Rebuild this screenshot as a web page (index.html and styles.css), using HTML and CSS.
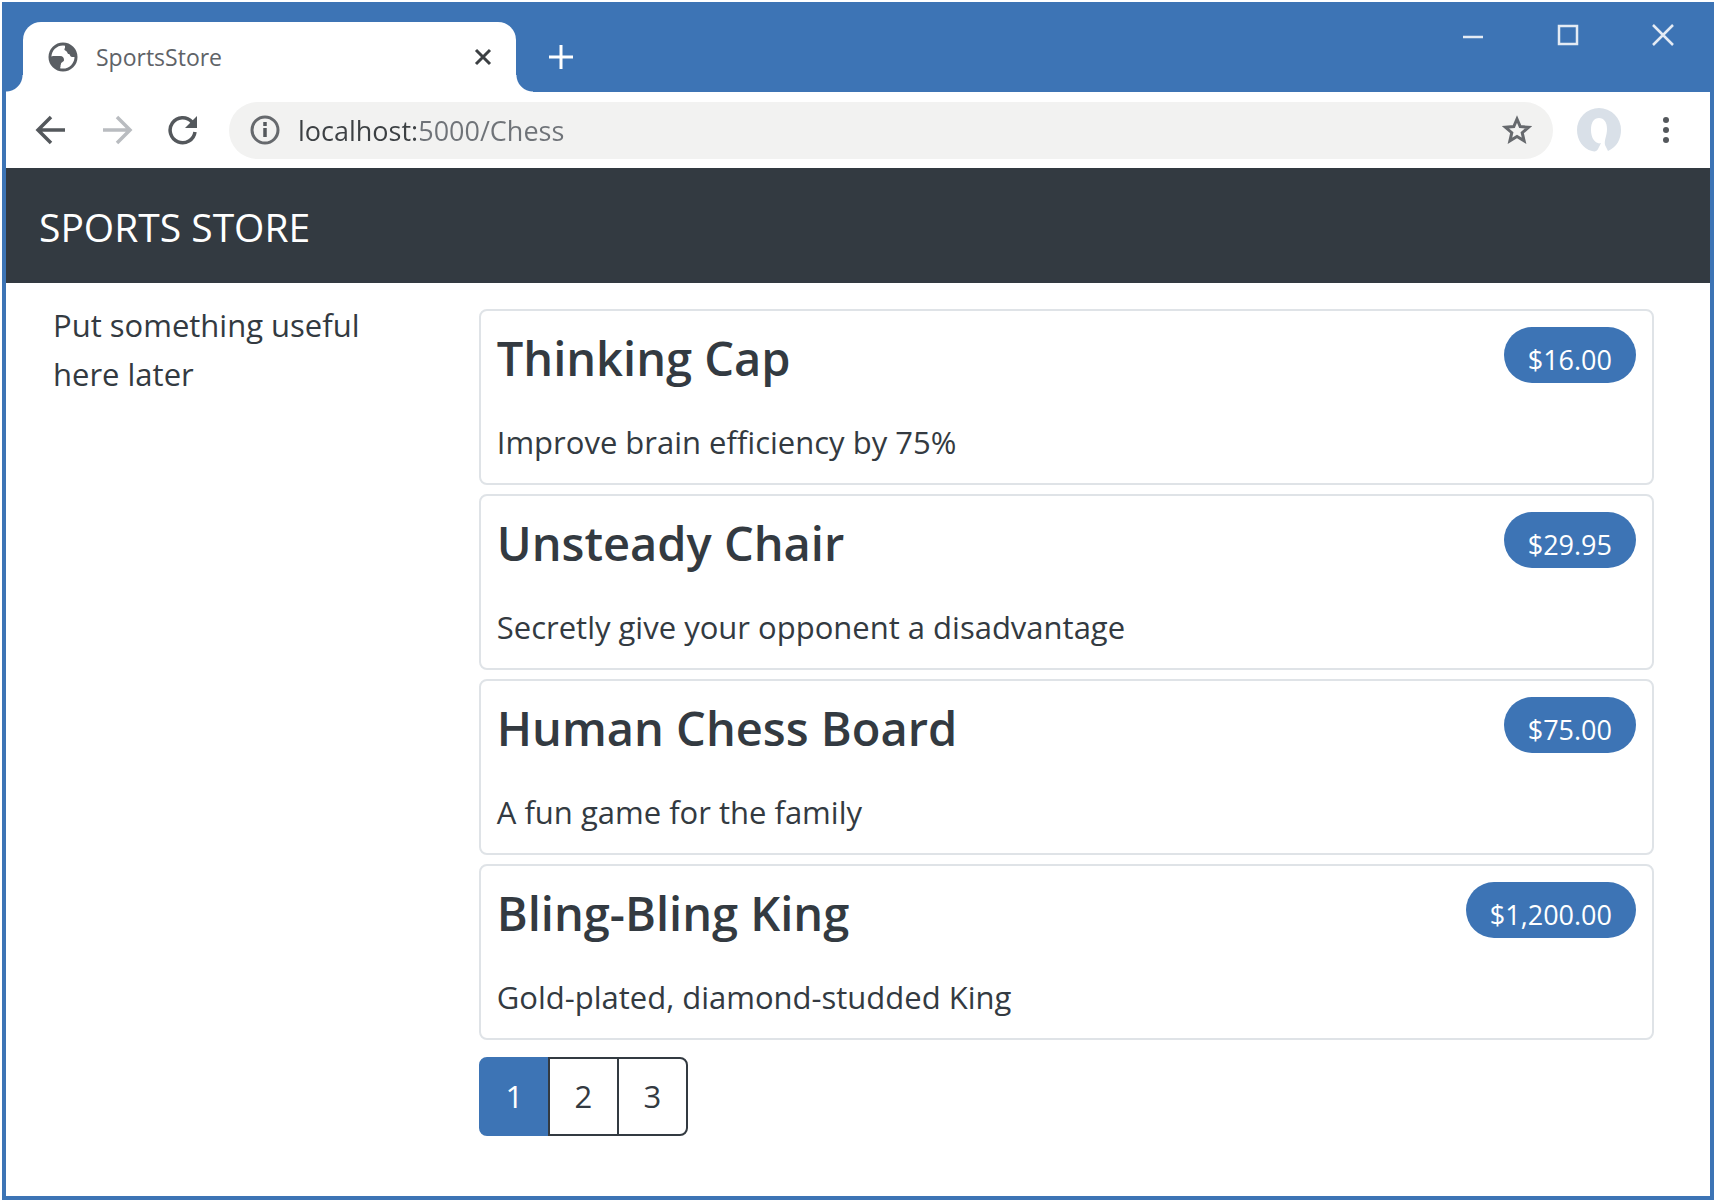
FILE: index.html
```html
<!DOCTYPE html>
<html lang="en">
<head>
<meta charset="utf-8">
<title>SportsStore</title>
<link rel="stylesheet" href="styles.css">
</head>
<body>
<div class="window">
  <div class="titlebar">
    <div class="tab">
      <svg class="tab-icon" viewBox="0 0 30 30" aria-hidden="true"><circle cx="15" cy="15" r="13" fill="#fff" stroke="#5a5e63" stroke-width="3"/><path d="M17 3v3c-1 1-1 2 1 3s1 3 3 3c1 0 1 3 3 3h4l-1-6-5-5zM2 15l3-1h7c3 0 4 2 4 4s-3 2-3 4c-1 2 0 3-1 4l1 2-6-3-4-5z" fill="#5a5e63"/></svg>
      <span class="tab-title">SportsStore</span>
      <button class="tab-close" aria-label="Close tab"><svg viewBox="0 0 18 18" width="18" height="18"><path d="M2 2l14 14M16 2L2 16" stroke="#3c4043" stroke-width="3"/></svg></button>
    </div>
    <button class="new-tab" aria-label="New tab"><svg viewBox="0 0 26 26" width="26" height="26"><path d="M13 1v24M1 13h24" stroke="#fff" stroke-width="3"/></svg></button>
    <div class="window-controls">
      <button aria-label="Minimize"><svg viewBox="0 0 22 22" width="22" height="22"><path d="M1 13h20" stroke="#e4ebf4" stroke-width="2.500"/></svg></button>
      <button aria-label="Maximize"><svg viewBox="0 0 22 22" width="22" height="22"><path d="M2 2h18v18H2z" fill="none" stroke="#e4ebf4" stroke-width="2.500"/></svg></button>
      <button aria-label="Close"><svg viewBox="0 0 22 22" width="22" height="22"><path d="M1 1l20 20M21 1L1 21" stroke="#e4ebf4" stroke-width="2.500"/></svg></button>
    </div>
  </div>
  <div class="toolbar">
    <div class="nav-buttons">
      <button aria-label="Back"><svg viewBox="0 0 32 32" width="32" height="32"><path d="M30 16H4M16 3L3 16l13 13" fill="none" stroke="#54585c" stroke-width="3.500"/></svg></button>
      <button aria-label="Forward"><svg viewBox="0 0 32 32" width="32" height="32"><path d="M2 16h26M16 3l13 13-13 13" fill="none" stroke="#b9bcc0" stroke-width="3.500"/></svg></button>
      <button aria-label="Reload"><svg viewBox="0 0 32 32" width="32" height="32"><path d="M28 18a12.500 12.500 0 1 1-3-10" fill="none" stroke="#54585c" stroke-width="3.500"/><path d="M30 2v12H18z" fill="#54585c"/></svg></button>
    </div>
    <div class="address">
      <svg viewBox="0 0 30 30" width="30" height="30" aria-hidden="true"><circle cx="15" cy="15" r="13" fill="none" stroke="#66696d" stroke-width="3"/><path d="M15 13v9M15 7v4" stroke="#54585c" stroke-width="3.500"/></svg>
      <input class="url" type="text" aria-label="Address" value="localhost:5000/Chess">
      <button aria-label="Bookmark"><svg viewBox="0 0 30 30" width="30" height="30"><path d="M15 4l3.200 7.600 8.300.700-6.300 5.400 1.900 8.100-7.100-4.300-7.100 4.300 1.900-8.100-6.300-5.400 8.300-.700z" fill="none" stroke="#66696d" stroke-width="3"/></svg></button>
    </div>
    <button class="profile" aria-label="Profile"><svg viewBox="0 0 44 44" width="44" height="44"><path d="M15 43C6 41 0 32 0 22a22 22 0 0 1 44 0c0 9-4 17-13 21l-3-6c-1-5 2-9 2-16 0-7-3-11-8-11s-8 4-8 12c0 7 3 12 7 13 1 1 2 0 3 0l-3 6c-1 2-3 3-6 2z" fill="#d9e0e8"/></svg></button>
    <button class="menu" aria-label="Menu"><svg viewBox="0 0 8 30" width="8" height="30"><g fill="#54585c"><circle cx="4" cy="5" r="3"/><circle cx="4" cy="15" r="3"/><circle cx="4" cy="25" r="3"/></g></svg></button>
  </div>
  <header class="store-header">SPORTS STORE</header>
  <div class="store-body">
    <aside class="sidebar">Put something useful here later</aside>
    <main>
      <div class="products">
        <article class="card"><div class="card-head"><h2>Thinking Cap</h2><span class="price">$16.00</span></div><p>Improve brain efficiency by 75%</p></article>
        <article class="card"><div class="card-head"><h2>Unsteady Chair</h2><span class="price">$29.95</span></div><p>Secretly give your opponent a disadvantage</p></article>
        <article class="card"><div class="card-head"><h2>Human Chess Board</h2><span class="price">$75.00</span></div><p>A fun game for the family</p></article>
        <article class="card"><div class="card-head"><h2>Bling-Bling King</h2><span class="price">$1,200.00</span></div><p>Gold-plated, diamond-studded King</p></article>
      </div>
      <nav class="pages" aria-label="Pages"><a class="current" href="#1">1</a><a href="#2">2</a><a href="#3">3</a></nav>
    </main>
  </div>
</div>
</body>
</html>
```
FILE: styles.css
```css
:root {
  --blue: #3d74b5;
  --dark: #333a41;
}

* {
  box-sizing: border-box;
}

body {
  display: flex;
  min-height: 100vh;
  margin: 0;
  padding: 2px;
  background: #fff;
  color: var(--dark);
  font: 31px/49px "Open Sans", "Noto Sans", sans-serif;
}

button {
  display: flex;
  padding: 0;
  border: 0;
  background: none;
}

.window {
  display: flex;
  flex: 1;
  flex-direction: column;
  border: 4px solid var(--blue);
  border-top: 0;
}

.titlebar {
  display: flex;
  height: 90px;
  padding-left: 17px;
  background: var(--blue);
}

.tab {
  position: relative;
  display: flex;
  align-items: center;
  width: 493px;
  margin-top: 20px;
  padding: 0 24px 0 25px;
  border-radius: 18px 18px 0 0;
  background: #fff;
}

.tab::before,
.tab::after {
  position: absolute;
  bottom: 0;
  width: 17px;
  height: 17px;
  content: "";
}

.tab::before {
  right: 100%;
  background: radial-gradient(circle at 0 0, var(--blue) 16px, #fff 17px);
}

.tab::after {
  left: 100%;
  background: radial-gradient(circle at 100% 0, var(--blue) 16px, #fff 17px);
}

.tab-icon {
  width: 30px;
  height: 30px;
}

.tab-title {
  flex: 1;
  margin-left: 18px;
  color: #5f6368;
  font-size: 23px;
}

.new-tab {
  align-items: center;
  margin: 20px 0 0 32px;
}

.window-controls {
  display: flex;
  gap: 73px;
  margin: 22px 36px 0 auto;
  align-items: flex-start;
}

.toolbar {
  display: flex;
  align-items: center;
  height: 76px;
  padding: 0 40px 0 29px;
}

.nav-buttons {
  display: flex;
  gap: 34px;
}

.address {
  display: flex;
  flex: 1;
  align-items: center;
  height: 57px;
  margin-left: 30px;
  padding: 0 21px;
  border-radius: 29px;
  background: #f2f2f1;
}

.url {
  flex: 1;
  min-width: 0;
  margin-left: 18px;
  padding: 0;
  border: 0;
  background: linear-gradient(90deg, #3c4043 120px, #6f7378 120px);
  background-clip: text;
  color: transparent;
  font: inherit;
  font-size: 27px;
}

.profile {
  margin-left: 24px;
}

.menu {
  margin-left: 41px;
}

.store-header {
  padding: 34px 33px 32px;
  background: var(--dark);
  color: #fff;
  font-size: 39px;
}

.store-body {
  display: grid;
  grid-template-columns: 1fr 3fr;
  gap: 34px;
  padding: 26px 56px 56px 47px;
}

.sidebar {
  padding-right: 24px;
  margin-top: -8px;
}

.products {
  display: grid;
  gap: 9px;
}

.card {
  height: 176px;
  padding: 16px;
  border: 2px solid #dfe3e7;
  border-radius: 8px;
}

.card-head {
  display: flex;
  align-items: flex-start;
  justify-content: space-between;
}

.card h2 {
  margin: 0;
  font-size: 47px;
  font-weight: 600;
  line-height: 63px;
}

.card p {
  margin: 28px 0 0;
}

.price {
  height: 56px;
  padding: 10px 24px 0;
  border-radius: 28px;
  background: var(--blue);
  color: #fff;
  font-size: 27px;
  line-height: 46px;
}

.pages {
  display: flex;
  margin-top: 17px;
}

.pages a {
  width: 71px;
  margin-left: -2px;
  padding: 13px 0;
  border: 2px solid var(--dark);
  color: inherit;
  text-align: center;
  text-decoration: none;
}

.pages a:first-child {
  margin-left: 0;
  border-radius: 8px 0 0 8px;
}

.pages a:last-child {
  border-radius: 0 8px 8px 0;
}

.pages .current {
  border-color: var(--blue);
  background: var(--blue);
  color: #fff;
}
```
